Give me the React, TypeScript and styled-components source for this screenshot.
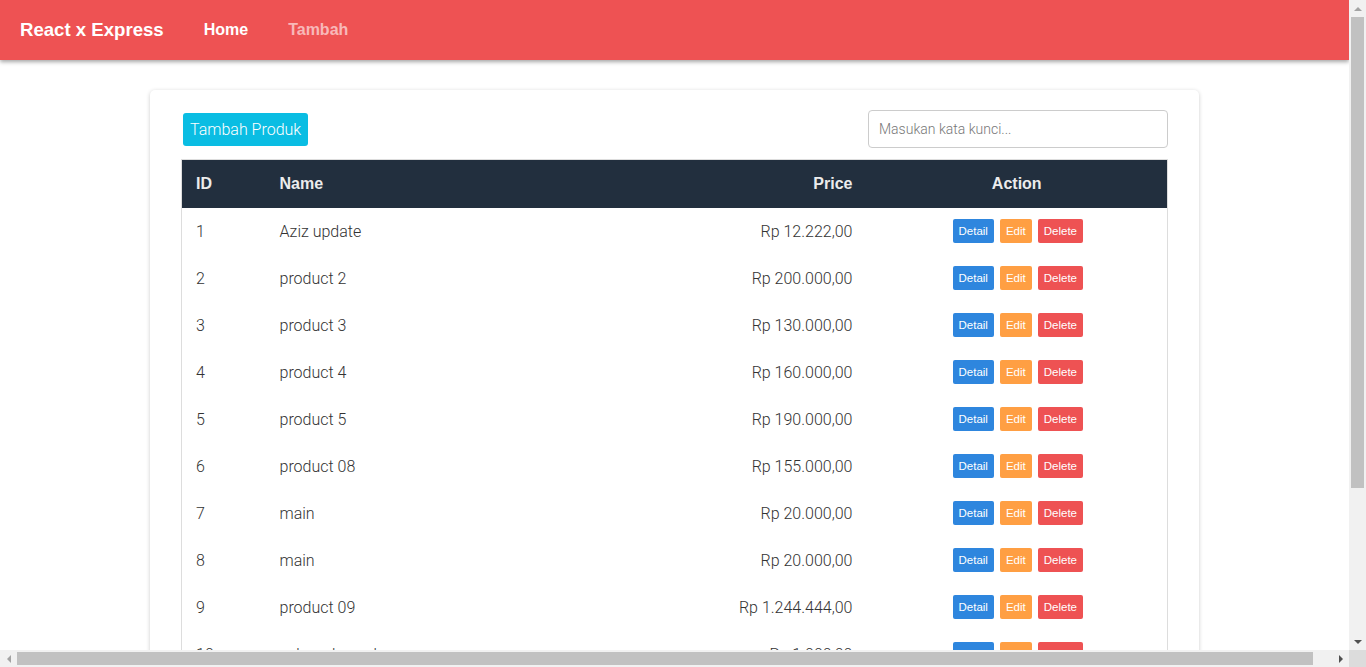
import React from "react";
import styled, { createGlobalStyle } from "styled-components";

const GlobalStyle = createGlobalStyle`
  html, body { margin: 0; padding: 0; background: #fff; overflow: hidden; }
  body { font-family: Roboto, "Liberation Sans", sans-serif; font-weight: 300; color: #333; }
  * { box-sizing: border-box; }
`;

/* Browser-like frame with classic scrollbars */
const Screen = styled.div`
  width: 100vw;
  height: 100vh;
  display: grid;
  grid-template-columns: 1fr 17px;
  grid-template-rows: 1fr 17px;
  overflow: hidden;
`;

const Viewport = styled.div`
  overflow: hidden;
  min-width: 0;
  min-height: 0;
`;

const VScroll = styled.div`
  background: #f1f1f1;
  display: flex;
  flex-direction: column;
`;

const HScroll = styled.div`
  background: #f1f1f1;
  display: flex;
`;

const Corner = styled.div`
  background: #dcdcdc;
`;

const ScrollButton = styled.div`
  width: 17px;
  height: 17px;
  flex: none;
  display: flex;
  align-items: center;
  justify-content: center;
`;

const Arrow = styled.span<{ $dir: "up" | "down" | "left" | "right"; $dim?: boolean }>`
  width: 0;
  height: 0;
  ${(p) => {
    const c = p.$dim ? "#a3a3a3" : "#505050";
    switch (p.$dir) {
      case "up":
        return `border-left: 4px solid transparent; border-right: 4px solid transparent; border-bottom: 4px solid ${c};`;
      case "down":
        return `border-left: 4px solid transparent; border-right: 4px solid transparent; border-top: 4px solid ${c};`;
      case "left":
        return `border-top: 4px solid transparent; border-bottom: 4px solid transparent; border-right: 4px solid ${c};`;
      default:
        return `border-top: 4px solid transparent; border-bottom: 4px solid transparent; border-left: 4px solid ${c};`;
    }
  }}
`;

const VTrack = styled.div`
  flex: 1;
  padding: 0 2px;
`;

const VThumb = styled.div`
  height: 471px;
  background: #c1c1c1;
`;

const HTrack = styled.div`
  flex: 1;
  padding: 2px 0;
`;

const HThumb = styled.div`
  width: 1296px;
  height: 100%;
  background: #c1c1c1;
`;

/* Page */
const Navbar = styled.nav`
  height: 60px;
  background: #ee5253;
  box-shadow: 0 2px 4px rgba(0, 0, 0, 0.35);
  display: flex;
  align-items: center;
  padding: 0 20px;
  font-family: "Liberation Sans", Arial, sans-serif;
  position: relative;
`;

const Brand = styled.a`
  color: #fff;
  font-size: 18.6px;
  font-weight: 700;
  margin-right: 40px;
  text-decoration: none;
`;

const NavLink = styled.a<{ $active?: boolean }>`
  color: ${(p) => (p.$active ? "#fff" : "rgba(255,255,255,0.6)")};
  font-size: 16px;
  font-weight: 700;
  margin-right: 40px;
  text-decoration: none;
`;

const Card = styled.main`
  width: 1049px;
  margin: 30px auto 48px;
  background: #fff;
  border-radius: 5px;
  box-shadow: 0 1px 4px rgba(0, 0, 0, 0.2);
  padding: 20px 31px 31px;
`;

const Toolbar = styled.div`
  display: flex;
  justify-content: space-between;
  align-items: center;
  margin-bottom: 11px;
`;

const AddButton = styled.button`
  margin-left: 2px;
  height: 33px;
  padding: 0 7px;
  background: #0abde3;
  color: #fff;
  border: none;
  border-radius: 3px;
  font-family: Roboto, sans-serif;
  font-weight: 300;
  font-size: 16px;
`;

const Search = styled.input`
  width: 300px;
  height: 38px;
  border: 1px solid #ccc;
  border-radius: 4px;
  padding: 0 10px;
  font-family: Roboto, sans-serif;
  font-weight: 300;
  font-size: 14px;
  color: #333;
  &::placeholder { color: #777; }
`;

const Table = styled.table`
  width: 100%;
  border-collapse: collapse;
  border: 1px solid #ddd;
`;

const Th = styled.th<{ $align?: string; $width?: string }>`
  background: #222f3e;
  color: #ececec;
  height: 48px;
  font-family: "Liberation Sans", Arial, sans-serif;
  font-weight: 700;
  font-size: 16px;
  text-align: ${(p) => p.$align || "left"};
  padding: 0 14px;
  width: ${(p) => p.$width || "auto"};
`;

const Td = styled.td<{ $align?: string }>`
  height: 47px;
  padding: 0 14px;
  font-size: 16px;
  font-weight: 300;
  color: #333;
  text-align: ${(p) => p.$align || "left"};
`;

const Actions = styled.div`
  display: flex;
  justify-content: center;
  gap: 6px;
  padding-left: 2px;
`;

const ActionButton = styled.button<{ $color: string }>`
  height: 24px;
  padding: 0 6px;
  border: none;
  border-radius: 2px;
  background: ${(p) => p.$color};
  color: #fff;
  font-family: "Liberation Sans", Arial, sans-serif;
  font-weight: 400;
  font-size: 11.5px;
`;

const products = [
  { id: 1, name: "Aziz update", price: "Rp 12.222,00" },
  { id: 2, name: "product 2", price: "Rp 200.000,00" },
  { id: 3, name: "product 3", price: "Rp 130.000,00" },
  { id: 4, name: "product 4", price: "Rp 160.000,00" },
  { id: 5, name: "product 5", price: "Rp 190.000,00" },
  { id: 6, name: "product 08", price: "Rp 155.000,00" },
  { id: 7, name: "main", price: "Rp 20.000,00" },
  { id: 8, name: "main", price: "Rp 20.000,00" },
  { id: 9, name: "product 09", price: "Rp 1.244.444,00" },
  { id: 10, name: "sabun dan sabun", price: "Rp 1.000,00" },
  { id: 11, name: "product 11", price: "Rp 50.000,00" },
  { id: 12, name: "product 12", price: "Rp 75.000,00" },
];

export default function App() {
  return (
    <>
      <GlobalStyle />
      <Screen>
        <Viewport>
          <Navbar>
            <Brand>React x Express</Brand>
            <NavLink $active>Home</NavLink>
            <NavLink>Tambah</NavLink>
          </Navbar>
          <Card>
            <Toolbar>
              <AddButton>Tambah Produk</AddButton>
              <Search placeholder="Masukan kata kunci..." />
            </Toolbar>
            <Table>
              <thead>
                <tr>
                  <Th $width="84px">ID</Th>
                  <Th>Name</Th>
                  <Th $align="right">Price</Th>
                  <Th $align="center" $width="301px">Action</Th>
                </tr>
              </thead>
              <tbody>
                {products.map((p) => (
                  <tr key={p.id}>
                    <Td>{p.id}</Td>
                    <Td>{p.name}</Td>
                    <Td $align="right">{p.price}</Td>
                    <Td>
                      <Actions>
                        <ActionButton $color="#2e86de">Detail</ActionButton>
                        <ActionButton $color="#ff9f43">Edit</ActionButton>
                        <ActionButton $color="#ee5253">Delete</ActionButton>
                      </Actions>
                    </Td>
                  </tr>
                ))}
              </tbody>
            </Table>
          </Card>
        </Viewport>
        <VScroll>
          <ScrollButton><Arrow $dir="up" $dim /></ScrollButton>
          <VTrack><VThumb /></VTrack>
          <ScrollButton><Arrow $dir="down" /></ScrollButton>
        </VScroll>
        <HScroll>
          <ScrollButton><Arrow $dir="left" $dim /></ScrollButton>
          <HTrack><HThumb /></HTrack>
          <ScrollButton><Arrow $dir="right" /></ScrollButton>
        </HScroll>
        <Corner />
      </Screen>
    </>
  );
}
